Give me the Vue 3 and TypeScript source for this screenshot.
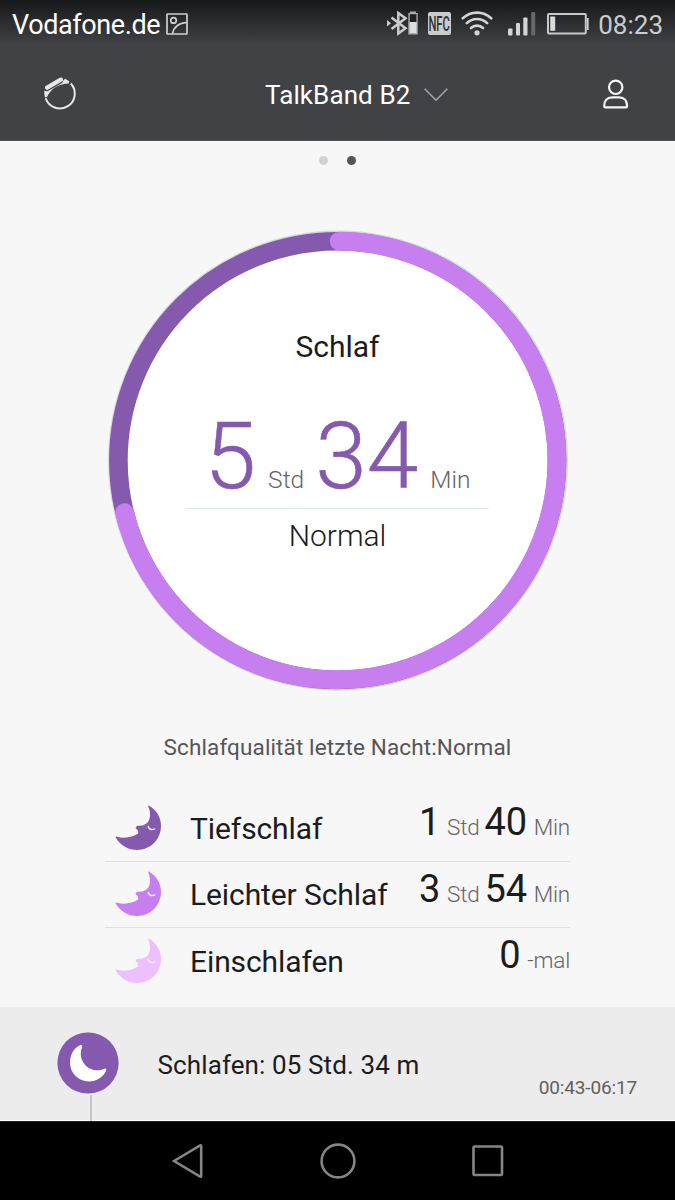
<script setup lang="ts">
interface Amount {
  value: string
  unit: string
}
interface Phase {
  name: string
  tone: string
  amounts: Amount[]
}

const total: Amount[] = [
  { value: '5', unit: 'Std' },
  { value: '34', unit: 'Min' },
]

const phases: Phase[] = [
  { name: 'Tiefschlaf', tone: 'deep', amounts: [{ value: '1', unit: 'Std' }, { value: '40', unit: 'Min' }] },
  { name: 'Leichter Schlaf', tone: 'light', amounts: [{ value: '3', unit: 'Std' }, { value: '54', unit: 'Min' }] },
  { name: 'Einschlafen', tone: 'pale', amounts: [{ value: '0', unit: '-mal' }] },
]
</script>

<template>
  <div class="screen">
    <div class="top">
      <div class="status">
        <span class="carrier">Vodafone.de</span>
        <svg class="shot" width="22" height="22" viewBox="0 0 22 22" fill="none" stroke="#cfd0d0" stroke-width="1.7">
          <rect x="1" y="1" width="20" height="20" rx=".6" />
          <circle cx="7.5" cy="7.4" r="2.8" />
          <path d="M6.500 21C7.500 14.500 12.500 10 21 9.500" />
        </svg>
        <svg class="bt" width="32" height="25" viewBox="0 0 32 25">
          <path d="M4.500 6.500 18.500 17.300 11.300 22.500V2l7.200 5.200L4.500 18" fill="none" stroke="#cbcccc" stroke-width="2.500" />
          <path d="M0 9 4 12.300 0 15.500z" fill="#cbcccc" />
          <path d="M23 .5h6V2h1.700v21.500h-9.400V2H23z" fill="#a9abac" />
          <path d="M22.800 3.200h6.600V11h-6.600z" fill="#202123" />
          <path d="M22.800 11h6.600v11h-6.600z" fill="#dedede" />
        </svg>
        <span class="nfc"><span>NFC</span></span>
        <svg class="wifi" width="32" height="25" viewBox="0 0 32 25" fill="none" stroke="#d3d4d4" stroke-width="2.6" stroke-linecap="round">
          <path d="M1.8 7.3a20.5 20.5 0 0 1 28.4 0M5.8 12.2a14.5 14.5 0 0 1 20.4 0M10 17a8.7 8.7 0 0 1 12 0" />
          <circle cx="16" cy="21.8" r="2.6" fill="#d3d4d4" stroke="none" />
        </svg>
        <svg class="signal" width="28" height="24" viewBox="0 0 28 24" fill="#d3d4d4">
          <rect x="0" y="16.5" width="4.500" height="7" rx="1" />
          <rect x="8" y="11" width="4" height="12.500" rx="1" />
          <rect x="15.300" y="5.500" width="4.200" height="18" rx="1" />
          <rect x="23.200" y="0" width="4" height="23.500" rx="1" fill="#66686a" />
        </svg>
        <svg class="battery" width="42" height="22" viewBox="0 0 42 22">
          <rect x="1" y="1" width="37.800" height="19.600" rx="1" fill="none" stroke="#c8c9c9" stroke-width="2" />
          <path d="M40 5h1.700v12H40z" fill="#c8c9c9" />
          <path d="M3.200 3.500h5v14.300h-5z" fill="#dadada" />
        </svg>
        <span class="clock">08:23</span>
      </div>
      <div class="header">
        <svg width="34" height="34" viewBox="0 0 34 34" fill="none" stroke="#e6e7e7">
          <path d="M2.700 21.300A14.900 14.900 0 1 0 27.800 6.500" stroke-width="2" />
          <path d="M4.200 10.600 17.800 2.700" stroke-width="4.400" stroke-linecap="round" />
          <path d="M1.300 13.800 3.800 14.300Q5 14.300 6 13.500L19 6Q20.300 5 20.300 3.500L22 1.800 26.300 4.200 25.600 6.400C16.500 6.500 8 11 4 20L2 20.400Q1 17 1.300 13.800z" fill="#e6e7e7" stroke="none" />
        </svg>
        <div class="device">
          <span>TalkBand B2</span>
          <svg width="24" height="14" viewBox="0 0 24 14"><path d="M.7.7 12 12.200 23.300.7" fill="none" stroke="#a5a6a7" stroke-width="1.500" /></svg>
        </div>
        <svg width="26" height="30" viewBox="0 0 26 30" fill="none" stroke="#f5f5f5" stroke-width="2.200">
          <circle cx="12.700" cy="8.300" r="6.700" />
          <path d="M1.300 27.400C1 21.500 4.200 18.300 9.200 18.300h7c5 0 8.100 3.200 7.800 9.100q0 .9-1 .9H2.300q-1 0-1-.9z" />
        </svg>
      </div>
    </div>

    <div class="dots"><i></i><i class="active"></i></div>

    <div class="dial">
      <svg class="ring" width="462" height="462" viewBox="0 0 462 462" fill="none">
        <circle cx="231" cy="230.500" r="230" fill="#d3d9da" />
        <circle cx="230.700" cy="230.500" r="219.300" fill="#fff" stroke="#855aae" stroke-width="18.600" />
        <path d="M232.200 11.200A219.300 219.300 0 1 1 17.600 282.700" stroke="#c77eef" stroke-width="18.800" stroke-linecap="round" />
      </svg>
      <div class="face">
        <div class="title">Schlaf</div>
        <div class="total">
          <template v-for="t in total" :key="t.unit">
            <span class="big">{{ t.value }}</span><span class="unit">{{ t.unit }}</span>
          </template>
        </div>
        <div class="quality">Normal</div>
      </div>
    </div>

    <div class="caption">Schlafqualität letzte Nacht:Normal</div>

    <div class="phases">
      <div v-for="p in phases" :key="p.name" class="phase">
        <svg :class="p.tone" width="47" height="46" viewBox="0 0 47 46">
          <path d="M34.2.7C41.5 4.8 46 12.3 46 20.8 46 34.5 35.5 45 22 45 13.500 45 5.500 40.300.8 32.700.2 31.600 1 31.400 2 31.700 9 33.700 17.500 32.700 23 28.600 23.900 27.700 22.700 26.700 22.800 25.800 22.900 24.500 20.200 23.400 20.700 22.200 21.100 21.200 22.300 20.600 23.800 20.700 29 21.200 33.500 18.200 34.600 13.500 35.500 9.500 35 5.500 33.300 1.600 32.900.7 33.400.3 34.200.7z" fill="currentColor" />
          <path d="M33.200 21.500C34 24.300 36.500 25.100 39.800 23.900" fill="none" stroke="#f5eafa" stroke-width="1.500" stroke-linecap="round" />
        </svg>
        <span class="name">{{ p.name }}</span>
        <span class="amounts">
          <template v-for="a in p.amounts" :key="a.unit">
            <b>{{ a.value }}</b><span>{{ a.unit }}</span>
          </template>
        </span>
      </div>
    </div>

    <div class="timeline">
      <div class="marker">
        <svg width="62" height="62" viewBox="0 0 62 62">
          <circle cx="31" cy="31" r="30.600" fill="#855aae" />
          <path d="M22.500 13.500C24.500 12.300 25.800 13.500 25 15.300 20.500 27 29 38.800 41 38.300 43.500 38.200 45.500 37.300 47.500 36.700 49 36.300 49.700 37.300 49 38.800 46 45.500 39.500 49.500 32 49.500 21.500 49.500 13 41.300 13 30.800 13 23 16.500 16.500 22.500 13.500z" fill="#fff" />
        </svg>
        <i></i>
      </div>
      <span class="entry">Schlafen: 05 Std. 34 m</span>
      <span class="span">00:43-06:17</span>
    </div>

    <div class="nav">
      <svg width="32" height="36" viewBox="0 0 32 36"><path d="M2 18 28.200 2.400q1-.5 1 .7v29.800q0 1.200-1 .7z" /></svg>
      <svg width="36" height="36" viewBox="0 0 36 36"><circle cx="18" cy="18" r="16.400" /></svg>
      <svg width="32" height="32" viewBox="0 0 32 32"><rect x="1.500" y="1.500" width="28.500" height="28.500" rx="1" /></svg>
    </div>
  </div>
</template>

<style>
body {
  margin: 0;
  background: #f7f7f7;
}
</style>

<style scoped>
.screen {
  width: 675px;
  height: 1200px;
  overflow: hidden;
  display: flex;
  flex-direction: column;
  background: #f7f7f7;
  color: #1c1c1c;
  font-family: Roboto, sans-serif;
  white-space: nowrap;
}
svg { display: block; flex: none; }
.top {
  height: 141px;
  box-sizing: border-box;
  border-bottom: 1px solid #4f5054;
  background: linear-gradient(#17181a 0, #202123 10px, #404246 45px);
}
.status {
  height: 50px;
  box-sizing: border-box;
  padding: 0 12px 0 12px;
  display: flex;
  align-items: center;
  line-height: 50px;
}
.carrier { color: #fff; font-size: 27px; letter-spacing: -.4px; width: 154px; }
.shot { margin-top: -3px; }
.bt { margin: -4px 0 0 199px; }
.nfc {
  width: 23px;
  height: 23px;
  margin: -4px 10px 0 9px;
  border-radius: 2px;
  background: #cbcccc;
  color: #303133;
  font-size: 20px;
  line-height: 24px;
  display: flex;
  justify-content: center;
}
.nfc span { transform: scaleX(.56); font-weight: 500; }
.wifi { margin-top: -4px; }
.signal { margin: -3px 0 0 15px; }
.battery { margin: -3px 0 0 11px; }
.clock { margin-left: auto; color: #cbcccc; font-size: 26px; }
.header {
  height: 90px;
  box-sizing: border-box;
  padding: 0 46px 0 43px;
  display: flex;
  align-items: center;
}
.header > svg { margin-top: -3px; }
.device {
  display: flex;
  align-items: center;
  gap: 14px;
  margin: 0 auto 0 188px;
  color: #fff;
  font-size: 26px;
  letter-spacing: .1px;
  line-height: 92px;
}
.device svg { margin-top: -1px; }
.dots {
  height: 89px;
  padding: 15px 0 0 319px;
  box-sizing: border-box;
  display: flex;
  gap: 18.500px;
}
.dots i { width: 9px; height: 9px; border-radius: 50%; background: #d2d2d2; }
.dots .active { background: #555; }
.dial { display: grid; justify-content: center; height: 462px; }
.ring, .face { grid-area: 1 / 1; }
.face { text-align: center; padding-top: 97px; }
.title { font-size: 30px; line-height: 40px; }
.total {
  width: 303px;
  height: 142px;
  margin: 0 auto;
  box-sizing: border-box;
  border-bottom: 1px solid #dde6e9;
  display: flex;
  justify-content: center;
  align-items: baseline;
  line-height: 180px;
}
.big { color: #855aae; font-size: 93px; font-weight: 300; -webkit-text-stroke: .5px #855aae; }
.unit { color: #666; font-size: 24.500px; font-weight: 300; margin: 0 11px 0 12px; }
.unit:last-child { margin-right: 0; }
.quality { font-size: 30px; font-weight: 300; line-height: 40px; margin-top: 7px; }
.caption {
  height: 103px;
  line-height: 110px;
  text-align: center;
  color: #555;
  font-size: 22.500px;
  letter-spacing: .12px;
}
.phases { width: 465px; margin: 0 auto; height: 212px; }
.phase {
  height: 66px;
  box-sizing: border-box;
  padding-left: 10px;
  display: flex;
  align-items: center;
  border-bottom: 1px solid #dedede;
}
.phase:first-child { height: 67px; }
.phase:last-child { border: 0; }
.phase svg { margin-top: -1px; }
.deep { color: #855aae; }
.light { color: #c77eef; }
.pale { color: #edbfff; }
.name { font-size: 30px; letter-spacing: -.1px; margin-left: 28px; }
.amounts { margin-left: auto; padding-bottom: 12px; display: flex; align-items: baseline; }
.amounts b { font-size: 38px; font-weight: 400; margin-left: 5px; letter-spacing: -.3px; }
.amounts span { font-size: 22.500px; font-weight: 300; color: #666; margin-left: 7px; letter-spacing: -.2px; }
.timeline {
  height: 114px;
  box-sizing: border-box;
  padding: 0 38px 0 57px;
  display: flex;
  border-bottom: 1px solid #fff;
  background: #ececec;
}
.marker { width: 62px; padding-top: 25px; }
.marker i { display: block; width: 2px; height: 26px; margin: 1px 0 0 33px; background: #c6c6c6; }
.entry { font-size: 26px; letter-spacing: .11px; line-height: 117px; margin-left: 38.500px; }
.span { font-size: 19px; letter-spacing: -.15px; line-height: 161px; height: 113px; margin-left: auto; color: #606060; }
.nav {
  height: 79px;
  box-sizing: border-box;
  padding-left: 172px;
  display: flex;
  align-items: center;
  background: #000;
  border-top: 1px solid #222;
}
.nav svg { fill: none; stroke: #858585; stroke-width: 2.600; }
.nav svg:nth-child(2) { margin: 0 116px 0 115.500px; }
</style>
